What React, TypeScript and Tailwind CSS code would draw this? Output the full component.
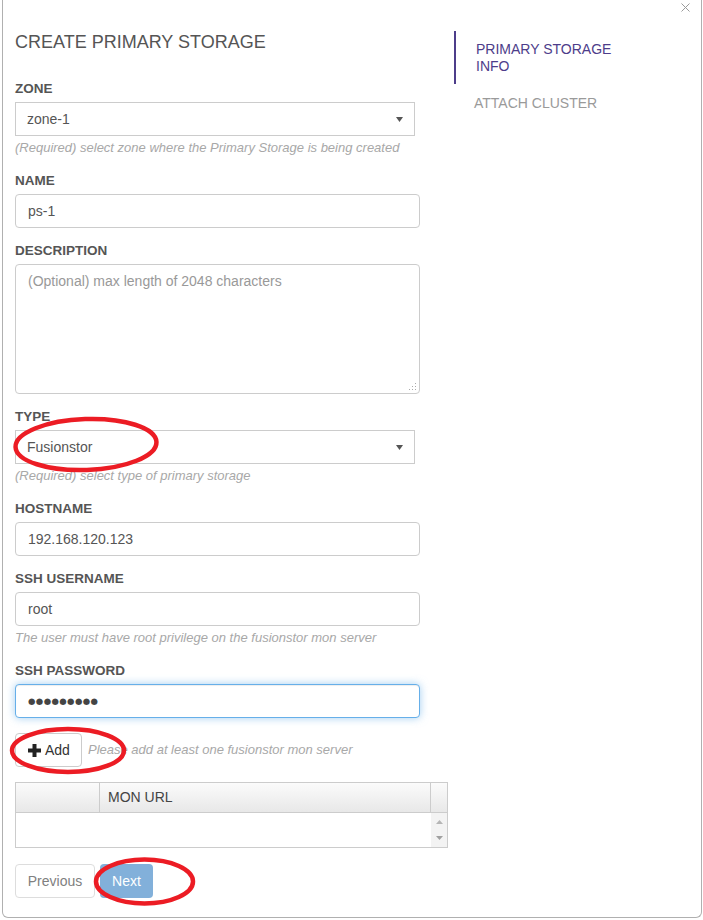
import React from "react";

const Label = ({ children }: { children: React.ReactNode }) => (
  <label className="mb-[4px] block text-[13.5px] font-bold leading-[18px] text-[#555]">{children}</label>
);

const Help = ({ children }: { children: React.ReactNode }) => (
  <p className="mb-[2px] mt-[3px] text-[13px] italic leading-[17px] text-[#a8a8a8]">{children}</p>
);

const Arrow = () => (
  <svg width="7" height="5" viewBox="0 0 7 5">
    <polygon points="0,0 7,0 3.5,5" fill="#555" />
  </svg>
);

const Select = ({ value }: { value: string }) => (
  <div className="flex h-[34px] w-[400px] items-center justify-between border border-[#ccc] bg-white pl-[11px] pr-[11px] text-[14px] text-[#555]">
    <span>{value}</span>
    <Arrow />
  </div>
);

const Input = ({ value }: { value: string }) => (
  <input
    readOnly
    defaultValue={value}
    className="block h-[34px] w-[405px] rounded-[4px] border border-[#ccc] bg-white px-[12px] text-[14px] text-[#555] outline-none"
  />
);

const Group = ({ children, last }: { children: React.ReactNode; last?: boolean }) => (
  <div className={last ? "mb-[15px] flex flex-col" : "mb-[14px] flex flex-col"}>{children}</div>
);

export default function App() {
  return (
    <div className="relative h-[920px] w-[703px] overflow-hidden bg-white font-['Liberation_Sans',Arial,sans-serif]">
      <div className="relative ml-[2px] flex h-[918px] w-[700px] rounded-b-[6px] border-x border-b border-[#b0b0b0] bg-white">
        <button className="absolute right-[11px] top-[3px]">
          <svg width="9" height="9" viewBox="0 0 9 9">
            <line x1="0.5" y1="0.5" x2="8.5" y2="8.5" stroke="#9a9a9a" strokeWidth="1" />
            <line x1="8.5" y1="0.5" x2="0.5" y2="8.5" stroke="#9a9a9a" strokeWidth="1" />
          </svg>
        </button>

        {/* form column */}
        <div className="flex w-[445px] flex-col pl-[12px] pt-[30px]">
          <h2 className="mb-[26px] text-[18px] leading-[24px] text-[#555]">CREATE PRIMARY STORAGE</h2>

          <Group>
            <Label>ZONE</Label>
            <Select value="zone-1" />
            <Help>(Required) select zone where the Primary Storage is being created</Help>
          </Group>

          <Group>
            <Label>NAME</Label>
            <Input value="ps-1" />
          </Group>

          <Group>
            <Label>DESCRIPTION</Label>
            <div className="relative w-[405px]">
              <textarea
                readOnly
                placeholder="(Optional) max length of 2048 characters"
                className="block h-[130px] w-[405px] resize-none rounded-[4px] border border-[#ccc] bg-white px-[12px] py-[6px] text-[14px] leading-[20px] text-[#555] outline-none placeholder:text-[#999]"
              />
              <svg className="absolute bottom-[3px] right-[3px]" width="8" height="8" viewBox="0 0 8 8">
                <rect x="6" y="0" width="1" height="1" fill="#aaa" />
                <rect x="3" y="3" width="1" height="1" fill="#aaa" />
                <rect x="6" y="3" width="1" height="1" fill="#aaa" />
                <rect x="0" y="6" width="1" height="1" fill="#aaa" />
                <rect x="3" y="6" width="1" height="1" fill="#aaa" />
                <rect x="6" y="6" width="1" height="1" fill="#aaa" />
              </svg>
            </div>
          </Group>

          <Group>
            <Label>TYPE</Label>
            <Select value="Fusionstor" />
            <Help>(Required) select type of primary storage</Help>
          </Group>

          <Group>
            <Label>HOSTNAME</Label>
            <Input value="192.168.120.123" />
          </Group>

          <Group>
            <Label>SSH USERNAME</Label>
            <Input value="root" />
            <Help>The user must have root privilege on the fusionstor mon server</Help>
          </Group>

          <Group last>
            <Label>SSH PASSWORD</Label>
            <input
              readOnly
              defaultValue="●●●●●●●●●"
              className="block h-[34px] w-[405px] rounded-[4px] border border-[#66afe9] bg-white px-[12px] font-['DejaVu_Sans',sans-serif] text-[8.5px] tracking-[0.4px] text-[#444] shadow-[inset_0_1px_1px_rgba(0,0,0,0.075),0_0_8px_rgba(102,175,233,0.6)] outline-none"
            />
          </Group>

          <div className="flex items-center">
            <button className="flex h-[34px] w-[67px] items-center rounded-[4px] border border-[#ccc] bg-white pl-[12px] text-[14px] text-[#333]">
              <svg width="13" height="13" viewBox="0 0 13 13">
                <rect x="4.5" y="0" width="4" height="13" fill="#222" />
                <rect x="0" y="4.5" width="13" height="4" fill="#222" />
              </svg>
              <span className="ml-[4px]">Add</span>
            </button>
            <span className="ml-[6px] text-[13px] italic text-[#a8a8a8]">Please add at least one fusionstor mon server</span>
          </div>

          <div className="mt-[15px] w-[433px] border border-[#ccc]">
            <div className="flex h-[30px] border-b border-[#ccc] bg-gradient-to-b from-[#fbfbfb] to-[#e8e8e8]">
              <div className="w-[84px] border-r border-[#ccc]" />
              <div className="flex flex-1 items-center border-r border-[#ccc] pl-[8px] text-[14px] text-[#444]">MON URL</div>
              <div className="w-[16px]" />
            </div>
            <div className="flex h-[34px]">
              <div className="flex-1" />
              <div className="flex w-[16px] flex-col items-center justify-between bg-[#f3f3f3] py-[7px]">
                <svg width="7" height="4" viewBox="0 0 7 4">
                  <polygon points="0,4 7,4 3.5,0" fill="#b5b5b5" />
                </svg>
                <svg width="7" height="4" viewBox="0 0 7 4">
                  <polygon points="0,0 7,0 3.5,4" fill="#a0a0a0" />
                </svg>
              </div>
            </div>
          </div>

          <div className="mt-[16px] flex gap-[5px]">
            <button className="h-[34px] w-[80px] rounded-[4px] border border-[#ddd] bg-white text-[14px] text-[#808080]">Previous</button>
            <button className="h-[34px] w-[53px] rounded-[4px] bg-[#82b0da] text-[14px] text-white">Next</button>
          </div>
        </div>

        {/* nav column */}
        <div className="ml-[6px] pt-[31px]">
          <div className="w-[170px] border-l-2 border-[#4d3d8a] pb-[9px] pl-[20px] pt-[10px] text-[14px] leading-[17px] text-[#4d3d8a]">
            PRIMARY STORAGE INFO
          </div>
          <div className="pl-[20px] pt-[11px] text-[14px] leading-[17px] text-[#9a9a9a]">ATTACH CLUSTER</div>
        </div>
      </div>

      {/* red annotation ellipses */}
      <svg className="pointer-events-none absolute left-0 top-0" width="703" height="920" viewBox="0 0 703 920">
        <ellipse cx="86" cy="444.5" rx="70.5" ry="25.5" transform="rotate(-2 86 444.5)" fill="none" stroke="#ec1c24" strokeWidth="4.5" />
        <ellipse cx="68" cy="750.5" rx="56" ry="21.5" fill="none" stroke="#ec1c24" strokeWidth="4.5" />
        <ellipse cx="144.5" cy="881.5" rx="48.5" ry="22" fill="none" stroke="#ec1c24" strokeWidth="4.5" />
      </svg>
    </div>
  );
}
